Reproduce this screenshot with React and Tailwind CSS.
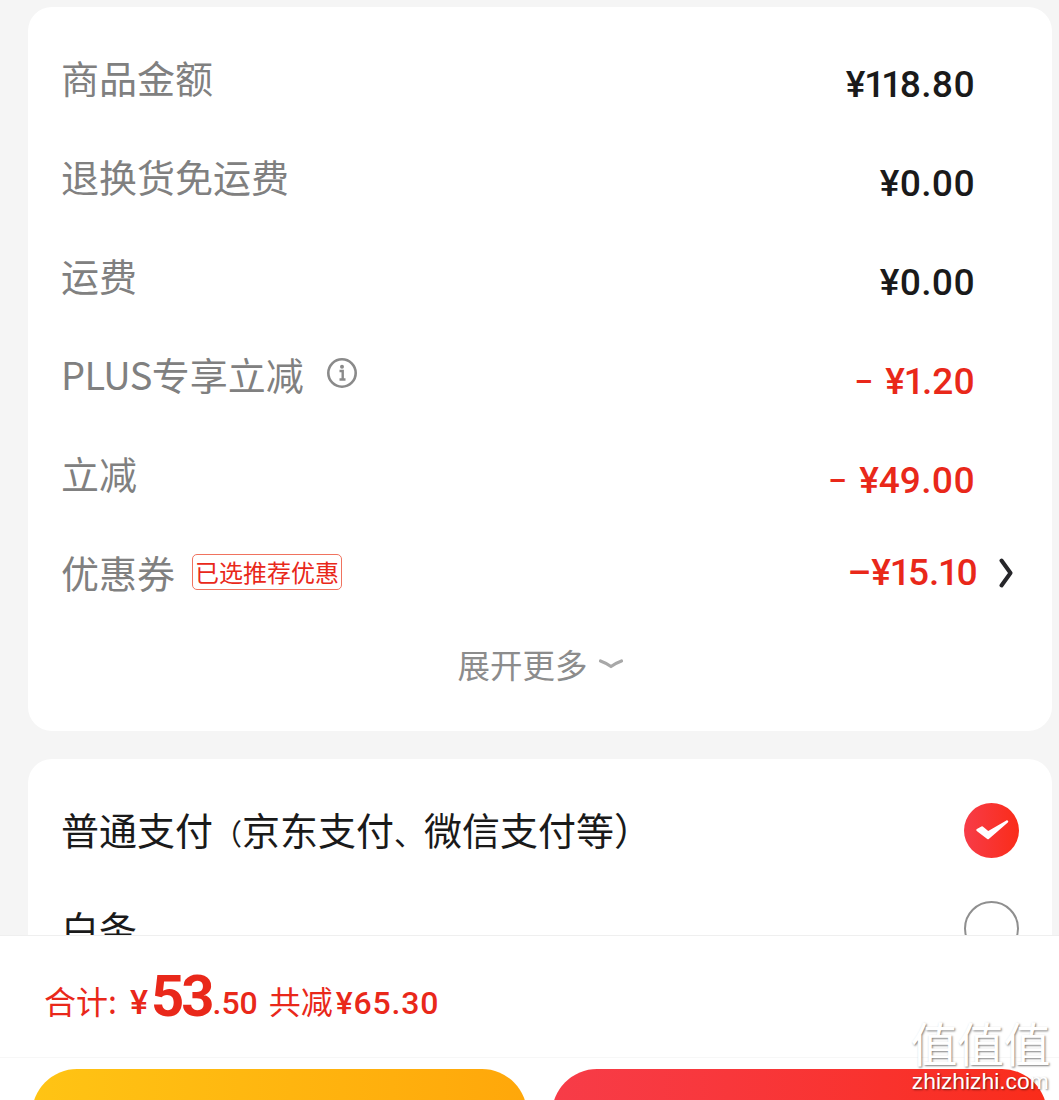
const cjk = "font-['Noto_Sans_CJK_SC','Noto_Sans',sans-serif]";
const num = "font-['Roboto','Noto_Sans_CJK_SC',sans-serif]";

function Row({ label, value, minus, red, extra }) {
  return (
    <div className="flex h-[99px] items-center justify-between pr-[77px]">
      <div className={`flex items-center text-[38px] text-[#808080] -mt-[8px] ${cjk}`}>
        <span>{label}</span>
        {extra}
      </div>
      <div className={`${num} mt-[8px] flex items-center text-[37px] font-medium proportional-nums ${red ? "text-[#e9281a]" : "text-[#1a1a1a]"}`}>
        {minus && <span className="mr-[13px] text-[28px] font-bold">–</span>}
        <span>{value}</span>
      </div>
    </div>
  );
}

function InfoIcon() {
  return (
    <svg width="32" height="32" viewBox="0 0 32 32" className="ml-[22px] -mt-[2px]" fill="none">
      <circle cx="16" cy="16" r="13.7" stroke="#8a8a8a" strokeWidth="2.6" />
      <circle cx="16" cy="9.8" r="2" fill="#8a8a8a" />
      <path d="M13.5 14h3.2v8.2M13.5 22.5h6" stroke="#8a8a8a" strokeWidth="2.4" />
    </svg>
  );
}

export default function App() {
  return (
    <div className="relative h-[1100px] w-full overflow-hidden bg-[#f5f5f5] pl-[28px] pr-[7px] pt-[7px]">
      <div className="h-[724px] rounded-[24px] bg-white pl-[33px] pt-[24px]">
        <Row label="商品金额" value="¥118.80" />
        <Row label="退换货免运费" value="¥0.00" />
        <Row label="运费" value="¥0.00" />
        <Row
          label={<><span className="tracking-[-0.6px]">PLUS</span>专享立减</>}
          value="¥1.20"
          minus
          red
          extra={<InfoIcon />}
        />
        <Row label="立减" value="¥49.00" minus red />
        <div className="flex h-[93px] items-center justify-between pr-[39px]">
          <div className={`flex items-center text-[38px] text-[#808080] ${cjk}`}>
            <span className="-mt-[2px]">优惠券</span>
            <span className="ml-[17px] -mt-[2px] flex h-[36px] w-[150px] items-center justify-center whitespace-nowrap rounded-[5px] border border-[#f0735f] text-[24px] text-[#e9281a]">已选推荐优惠</span>
          </div>
          <div className="flex items-center">
            <span className={`${num} text-[37px] font-medium proportional-nums text-[#e9281a]`}>–¥15.10</span>
            <svg width="14" height="30" viewBox="0 0 14 30" className="ml-[21px]" fill="none">
              <path d="M2.5 2.5 L11.5 15 L2.5 27.5" stroke="#26262a" strokeWidth="4" strokeLinecap="round" strokeLinejoin="round" />
            </svg>
          </div>
        </div>
        <div className={`flex items-center justify-center pr-[32px] pt-[21px] text-[32.5px] text-[#8c8c8c] ${cjk}`}>
          <span>展开更多</span>
          <svg width="26" height="12" viewBox="0 0 26 12" className="ml-[10px]" fill="none">
            <path d="M2.5 3 Q8 5 13 8.5 Q18 5 23.5 3" stroke="#a8a8a8" strokeWidth="3.2" strokeLinecap="round" strokeLinejoin="round" />
          </svg>
        </div>
      </div>

      <div className="mt-[28px] h-[400px] rounded-[24px] bg-white pl-[33px] pr-[33px]">
        <div className={`flex h-[142px] items-center justify-between text-[38px] text-[#1a1a1a] ${cjk}`}>
          <span className="-mt-[4px] whitespace-nowrap">
            普通支付<span className="text-[29px]">（</span>京东支付<span className="text-[30px]">、</span>微信支付等）
          </span>
          <svg width="55" height="55" viewBox="0 0 55 55">
            <defs>
              <linearGradient id="chk" x1="0" y1="0" x2="1" y2="0">
                <stop offset="0" stopColor="#f73c48" />
                <stop offset="1" stopColor="#fa2c19" />
              </linearGradient>
            </defs>
            <circle cx="27.5" cy="27.5" r="27.5" fill="url(#chk)" />
            <path d="M13.5 27 L24 35 L43 18.5 L24 29.5 L18 24.5 Z" fill="#fff" stroke="#fff" strokeWidth="2.5" strokeLinejoin="round" />
          </svg>
        </div>
        <div className={`flex h-[55px] items-center justify-between text-[38px] text-[#1a1a1a] ${cjk}`}>
          <span className="-mt-[2px]">白条</span>
          <span className="h-[55px] w-[55px] rounded-full border-2 border-[#8f8f8f]" />
        </div>
      </div>

      <div className="absolute inset-x-0 bottom-0 h-[165px] border-t border-[#efefef] bg-white">
        <div className={`flex h-[122px] items-center border-b border-[#f7f7f7] pl-[44px] text-[#e9281a] ${cjk}`}>
          <div className="flex items-baseline">
            <span className="text-[32px]">合计:</span>
            <span className={`${num} ml-[13px] mr-[3px] text-[34px] font-medium`}>¥</span>
            <span className={`${num} translate-y-[2px] text-[58px] leading-none font-bold tracking-[-3px]`}>53</span>
            <span className={`${num} ml-[1px] text-[32px] font-medium`}>.50</span>
            <span className="ml-[11px] text-[32px]">共减</span>
            <span className={`${num} ml-[3px] text-[32px] font-medium tracking-[0.8px]`}>¥65.30</span>
          </div>
        </div>
        <div className="flex gap-[25px] pl-[32px] pr-[12px] pt-[11px]">
          <div className="h-[90px] w-[495px] rounded-[50px] bg-gradient-to-r from-[#ffc414] to-[#ffa70a]" />
          <div className="h-[90px] w-[495px] rounded-[50px] bg-gradient-to-r from-[#f73c48] to-[#fa2c19]" />
        </div>
      </div>

      <div className="absolute right-[9px] bottom-[6px] flex flex-col items-center text-white [text-shadow:1px_1px_2px_rgba(0,0,0,0.5)]">
        <span className={`text-[47px] leading-[52px] tracking-[-0.5px] ${cjk}`}>值值值</span>
        <span className="font-['Liberation_Sans',sans-serif] text-[22.8px] leading-[26px]">zhizhizhi.com</span>
      </div>
    </div>
  );
}
